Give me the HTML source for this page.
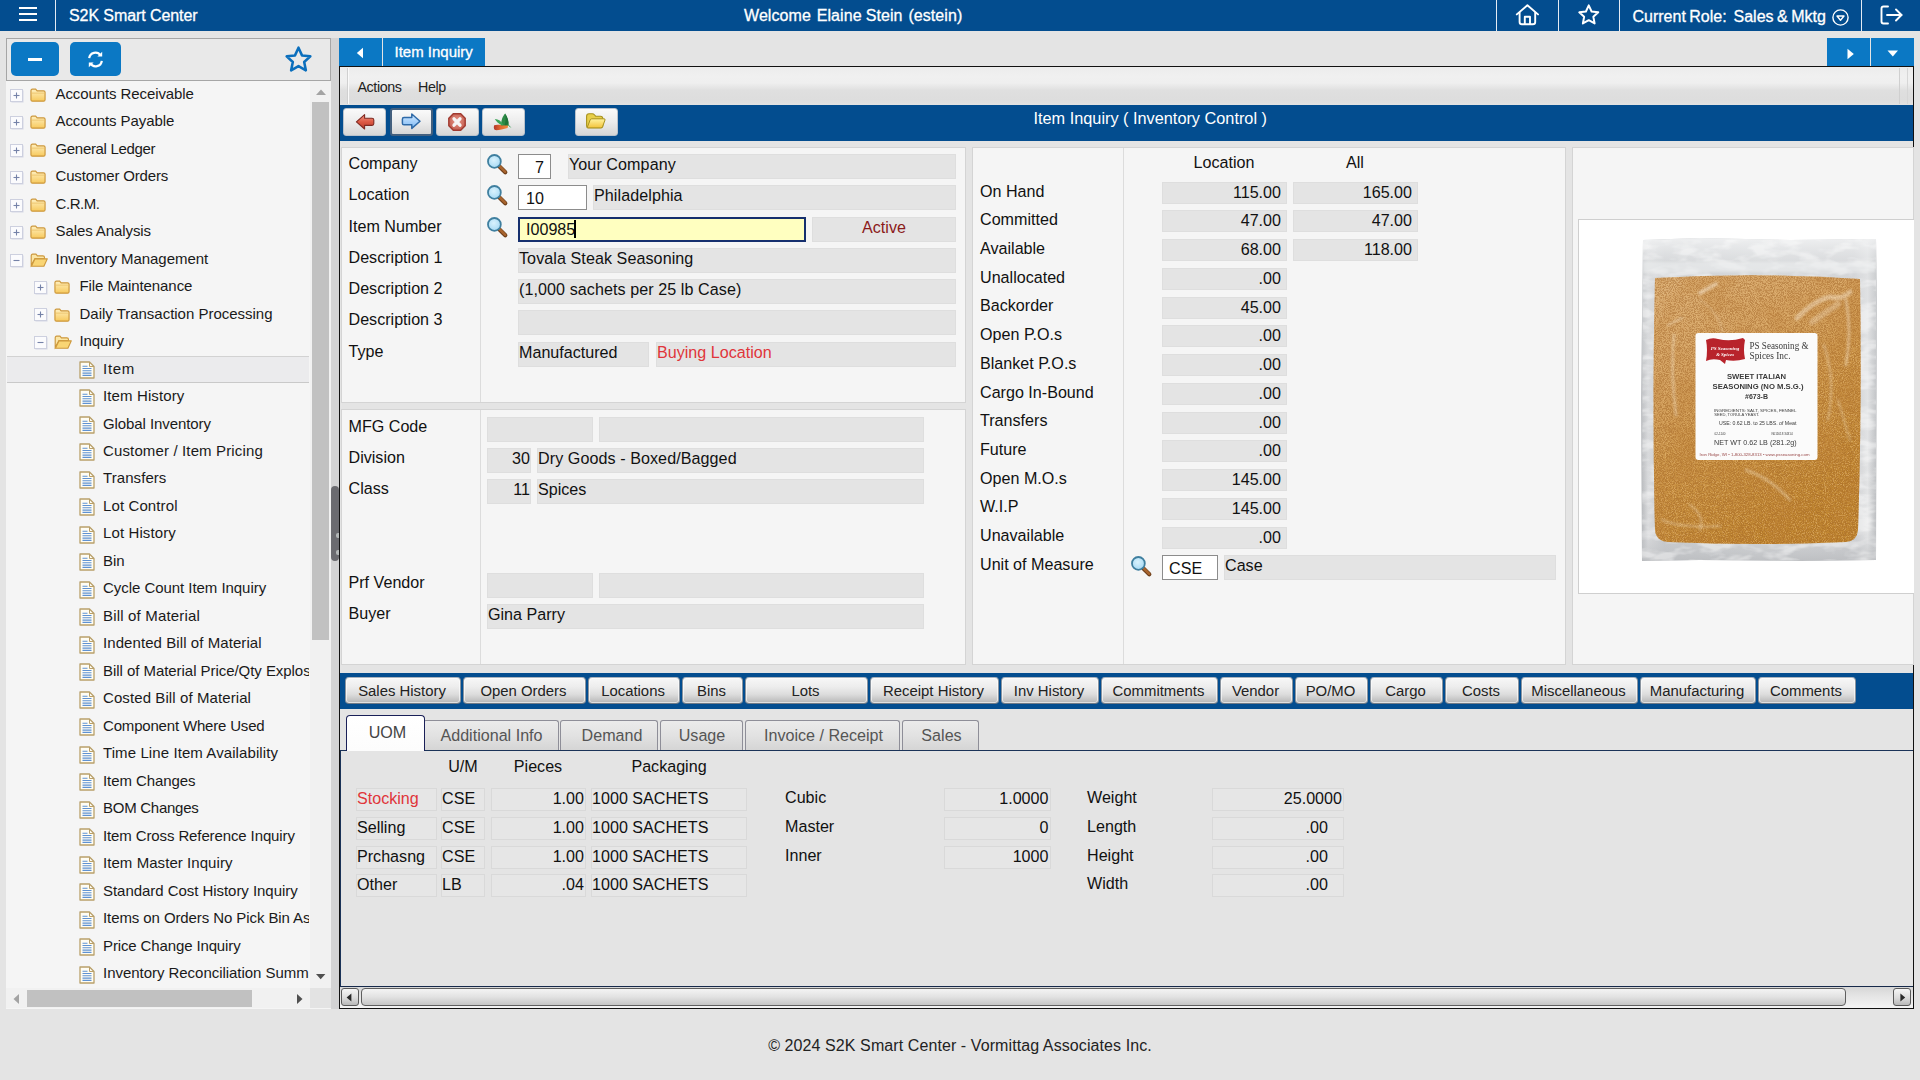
<!DOCTYPE html>
<html lang="en"><head><meta charset="utf-8"><title>S2K Smart Center</title>
<style>
html,body{margin:0;padding:0;}
body{width:1920px;height:1080px;overflow:hidden;background:#e4e4e4;font-family:"Liberation Sans",sans-serif;position:relative;color:#111;}
div{position:absolute;box-sizing:border-box;}
svg{position:absolute;overflow:visible;}
.t{white-space:nowrap;transform:translateY(-50%);line-height:1;}
.f{font-size:16.13px;}
.lbl{font-size:16.13px;white-space:nowrap;transform:translateY(-50%);line-height:1;color:#111;margin-top:-1px;}
.fld{background:#e4e4e4;border:1px solid #dedede;font-size:16.13px;white-space:nowrap;overflow:hidden;line-height:19px;padding:0;color:#111;}
.fld2{background:#e6e6e6;border:1px solid #d9d9d9;font-size:16.13px;white-space:nowrap;overflow:hidden;line-height:18px;padding:0 0px;color:#111;}
.inp{background:#fff;border:1px solid #8c8c8c;font-size:16.13px;white-space:nowrap;overflow:hidden;line-height:25px;padding:0 7px;color:#111;}
.r{text-align:right;}
.c{text-align:center;}
.panel{background:#f5f5f5;border:1px solid #d4d4d4;}
.tree{font-size:15px;white-space:nowrap;transform:translateY(-50%);line-height:1;color:#1a1a1a;margin-top:-1.25px;margin-left:1px;letter-spacing:-0.09px;}
.w{-webkit-text-stroke:0.3px #fff;}
.btn{background:linear-gradient(#f7f7f7 0%,#ededed 35%,#dddddd 65%,#c4c4c4 88%,#b2b2b2 100%);border:1px solid #7d8894;border-color:#aab3bd #8a949f #6f7a86 #8a949f;border-radius:4px;font-size:14.9px;text-align:center;line-height:26.5px;padding-right:2px;color:#222;white-space:nowrap;box-shadow:inset 0 0 0 1px rgba(255,255,255,.6);}
.tbtn{background:linear-gradient(#fafafa 0%,#ececec 50%,#d6d6d6 100%);border:1px solid #b9c2cc;border-radius:3px;}
.tab{background:linear-gradient(#ebebeb,#e2e2e2 50%,#d5d5d5);border:1px solid #8e8e98;border-bottom:none;border-radius:3px 3px 0 0;font-size:16.13px;text-align:center;color:#555;line-height:29px;white-space:nowrap;}
</style></head><body>
<svg width="0" height="0" style="left:0;top:0"><defs><linearGradient id="fg" x1="0" y1="0" x2="0" y2="1"><stop offset="0" stop-color="#fff0c0"/><stop offset="1" stop-color="#f7c95c"/></linearGradient><radialGradient id="mg" cx="0.45" cy="0.4" r="0.7"><stop offset="0" stop-color="#d9f2fd"/><stop offset="1" stop-color="#9fd6f3"/></radialGradient></defs></svg>
<div style="left:0px;top:0px;width:1920px;height:31px;background:#034d8f;"></div>
<div style="left:19px;top:7px;width:18px;height:2px;background:#fff;"></div>
<div style="left:19px;top:13px;width:18px;height:2px;background:#fff;"></div>
<div style="left:19px;top:19px;width:18px;height:2px;background:#fff;"></div>
<div style="left:55px;top:0px;width:1px;height:31px;background:#e4ebf4;"></div>
<div class="t w" style="left:69px;top:15.5px;color:#fff;font-size:16px;letter-spacing:-0.08px;">S2K Smart Center</div>
<div class="t w" style="left:744px;top:15.5px;color:#fff;font-size:16px;word-spacing:-1.6px;letter-spacing:0.07px;">Welcome&nbsp; Elaine <span style="margin-left:1.2px">Stein</span>&nbsp; (estein)</div>
<div style="left:1496px;top:0px;width:1px;height:31px;background:#e4ebf4;"></div>
<div style="left:1558px;top:0px;width:1px;height:31px;background:#e4ebf4;"></div>
<div style="left:1619px;top:0px;width:1px;height:31px;background:#e4ebf4;"></div>
<div style="left:1861px;top:0px;width:1px;height:31px;background:#e4ebf4;"></div>
<svg style="left:1515px;top:3px" width="25" height="23" viewBox="0 0 25 23" fill="none" stroke="#fff" stroke-width="1.9" stroke-linejoin="round" stroke-linecap="round"><path d="M1.8 11.4 L12.4 2.2 L23 11.4"/><path d="M4.6 9.6 V19 Q4.6 21.3 6.9 21.3 H17.9 Q20.2 21.3 20.2 19 V9.6"/><path d="M9.8 21 V13.8 H15 V21"/></svg>
<svg style="left:1577px;top:2.5px" width="23.5" height="23.5" viewBox="0 0 24 24" fill="none" stroke="#fff" stroke-width="2" stroke-linejoin="round"><path d="M12 2.4 L14.9 8.7 L21.7 9.5 L16.7 14.1 L18 20.9 L12 17.5 L6 20.9 L7.3 14.1 L2.3 9.5 L9.1 8.7 Z"/></svg>
<div class="t w" style="left:1632.5px;top:17.2px;color:#fff;font-size:16px;word-spacing:-1px;">Current Role:&nbsp; Sales &amp; Mktg</div>
<svg style="left:1832px;top:9px" width="17" height="17" viewBox="0 0 17 17" fill="none" stroke="#fff" stroke-width="1.4"><circle cx="8.5" cy="8.5" r="7.6"/><path d="M5 7 H12 L8.5 11.2 Z" stroke-linejoin="round"/></svg>
<svg style="left:1880px;top:4.5px" width="24" height="20" viewBox="0 0 24 20" fill="none" stroke="#fff" stroke-width="1.9" stroke-linecap="round" stroke-linejoin="round"><path d="M8 1.5 H3.5 Q1.5 1.5 1.5 3.5 V16.5 Q1.5 18.5 3.5 18.5 H8"/><path d="M7 10 H21.5"/><path d="M16 4.5 L21.5 10 L16 15.5"/></svg>
<div style="left:6px;top:38px;width:325px;height:971px;background:#f5f5f5;"></div>
<div style="left:6px;top:38px;width:325px;height:43px;background:#e9e9e9;border:1px solid #a6a6a6;"></div>
<div style="left:11px;top:42px;width:48px;height:34px;background:#0b78c4;border-radius:5px;"></div>
<div style="left:28px;top:58px;width:14px;height:3px;background:#fff;"></div>
<div style="left:70px;top:42px;width:51px;height:34px;background:#0b78c4;border-radius:5px;"></div>
<svg style="left:87px;top:51px" width="17" height="17" viewBox="0 0 17 17" fill="none" stroke="#fff" stroke-width="2.2"><path d="M2.2 7.2 A6.2 6.2 0 0 1 13.6 4.6"/><path d="M14.8 9.8 A6.2 6.2 0 0 1 3.4 12.4"/><path d="M15.2 0.8 V5.6 H10.4 Z" fill="#fff" stroke="none"/><path d="M1.8 16.2 V11.4 H6.6 Z" fill="#fff" stroke="none"/></svg>
<svg style="left:284px;top:45px" width="29" height="29" viewBox="0 0 24 24" fill="none" stroke="#0b6fbd" stroke-width="2.1" stroke-linejoin="round"><path d="M12 2.2 L14.9 8.6 L21.8 9.4 L16.7 14.1 L18.1 21 L12 17.5 L5.9 21 L7.3 14.1 L2.2 9.4 L9.1 8.6 Z"/></svg>
<div style="left:7px;top:81px;width:302px;height:907px;overflow:hidden;"><div style="left:0px;top:275px;width:304px;height:27px;background:#ebebed;border-bottom:1px solid #c9c9c9;border-top:1px solid #d2d2d2;"></div>
<svg style="left:3px;top:7.6px" width="14" height="14" viewBox="0 0 14 14"><rect x="1.5" y="1.5" width="12" height="12" fill="#c9cce0" opacity="0.7"/><rect x="0.5" y="0.5" width="12" height="12" fill="#fbfbfd" stroke="#cdd0df"/><path d="M3.5 6.5 H9.5" stroke="#7582a8" stroke-width="1.1"/><path d="M6.5 3.5 V9.5" stroke="#7582a8" stroke-width="1.1"/></svg>
<svg style="left:23px;top:6.8px" width="16" height="14.2" viewBox="0 0 17 15"><path d="M1 3 Q1 1.2 2.6 1.2 H6 L7.6 3 H14.4 Q16 3 16 4.6 V12.4 Q16 14 14.4 14 H2.6 Q1 14 1 12.4 Z" fill="url(#fg)" stroke="#cd983c" stroke-width="1.25"/><path d="M1.6 5.4 H15.4" stroke="#e9bd63" stroke-width="0.8" fill="none"/></svg>
<div class="tree" style="left:47.5px;top:13.0px;">Accounts Receivable</div>
<svg style="left:3px;top:35.1px" width="14" height="14" viewBox="0 0 14 14"><rect x="1.5" y="1.5" width="12" height="12" fill="#c9cce0" opacity="0.7"/><rect x="0.5" y="0.5" width="12" height="12" fill="#fbfbfd" stroke="#cdd0df"/><path d="M3.5 6.5 H9.5" stroke="#7582a8" stroke-width="1.1"/><path d="M6.5 3.5 V9.5" stroke="#7582a8" stroke-width="1.1"/></svg>
<svg style="left:23px;top:34.3px" width="16" height="14.2" viewBox="0 0 17 15"><path d="M1 3 Q1 1.2 2.6 1.2 H6 L7.6 3 H14.4 Q16 3 16 4.6 V12.4 Q16 14 14.4 14 H2.6 Q1 14 1 12.4 Z" fill="url(#fg)" stroke="#cd983c" stroke-width="1.25"/><path d="M1.6 5.4 H15.4" stroke="#e9bd63" stroke-width="0.8" fill="none"/></svg>
<div class="tree" style="left:47.5px;top:40.480000000000004px;">Accounts Payable</div>
<svg style="left:3px;top:62.6px" width="14" height="14" viewBox="0 0 14 14"><rect x="1.5" y="1.5" width="12" height="12" fill="#c9cce0" opacity="0.7"/><rect x="0.5" y="0.5" width="12" height="12" fill="#fbfbfd" stroke="#cdd0df"/><path d="M3.5 6.5 H9.5" stroke="#7582a8" stroke-width="1.1"/><path d="M6.5 3.5 V9.5" stroke="#7582a8" stroke-width="1.1"/></svg>
<svg style="left:23px;top:61.8px" width="16" height="14.2" viewBox="0 0 17 15"><path d="M1 3 Q1 1.2 2.6 1.2 H6 L7.6 3 H14.4 Q16 3 16 4.6 V12.4 Q16 14 14.4 14 H2.6 Q1 14 1 12.4 Z" fill="url(#fg)" stroke="#cd983c" stroke-width="1.25"/><path d="M1.6 5.4 H15.4" stroke="#e9bd63" stroke-width="0.8" fill="none"/></svg>
<div class="tree" style="left:47.5px;top:67.96000000000001px;letter-spacing:-0.321px;">General Ledger</div>
<svg style="left:3px;top:90.0px" width="14" height="14" viewBox="0 0 14 14"><rect x="1.5" y="1.5" width="12" height="12" fill="#c9cce0" opacity="0.7"/><rect x="0.5" y="0.5" width="12" height="12" fill="#fbfbfd" stroke="#cdd0df"/><path d="M3.5 6.5 H9.5" stroke="#7582a8" stroke-width="1.1"/><path d="M6.5 3.5 V9.5" stroke="#7582a8" stroke-width="1.1"/></svg>
<svg style="left:23px;top:89.2px" width="16" height="14.2" viewBox="0 0 17 15"><path d="M1 3 Q1 1.2 2.6 1.2 H6 L7.6 3 H14.4 Q16 3 16 4.6 V12.4 Q16 14 14.4 14 H2.6 Q1 14 1 12.4 Z" fill="url(#fg)" stroke="#cd983c" stroke-width="1.25"/><path d="M1.6 5.4 H15.4" stroke="#e9bd63" stroke-width="0.8" fill="none"/></svg>
<div class="tree" style="left:47.5px;top:95.44px;letter-spacing:-0.161px;">Customer Orders</div>
<svg style="left:3px;top:117.5px" width="14" height="14" viewBox="0 0 14 14"><rect x="1.5" y="1.5" width="12" height="12" fill="#c9cce0" opacity="0.7"/><rect x="0.5" y="0.5" width="12" height="12" fill="#fbfbfd" stroke="#cdd0df"/><path d="M3.5 6.5 H9.5" stroke="#7582a8" stroke-width="1.1"/><path d="M6.5 3.5 V9.5" stroke="#7582a8" stroke-width="1.1"/></svg>
<svg style="left:23px;top:116.7px" width="16" height="14.2" viewBox="0 0 17 15"><path d="M1 3 Q1 1.2 2.6 1.2 H6 L7.6 3 H14.4 Q16 3 16 4.6 V12.4 Q16 14 14.4 14 H2.6 Q1 14 1 12.4 Z" fill="url(#fg)" stroke="#cd983c" stroke-width="1.25"/><path d="M1.6 5.4 H15.4" stroke="#e9bd63" stroke-width="0.8" fill="none"/></svg>
<div class="tree" style="left:47.5px;top:122.92000000000002px;letter-spacing:-0.430px;">C.R.M.</div>
<svg style="left:3px;top:145.0px" width="14" height="14" viewBox="0 0 14 14"><rect x="1.5" y="1.5" width="12" height="12" fill="#c9cce0" opacity="0.7"/><rect x="0.5" y="0.5" width="12" height="12" fill="#fbfbfd" stroke="#cdd0df"/><path d="M3.5 6.5 H9.5" stroke="#7582a8" stroke-width="1.1"/><path d="M6.5 3.5 V9.5" stroke="#7582a8" stroke-width="1.1"/></svg>
<svg style="left:23px;top:144.2px" width="16" height="14.2" viewBox="0 0 17 15"><path d="M1 3 Q1 1.2 2.6 1.2 H6 L7.6 3 H14.4 Q16 3 16 4.6 V12.4 Q16 14 14.4 14 H2.6 Q1 14 1 12.4 Z" fill="url(#fg)" stroke="#cd983c" stroke-width="1.25"/><path d="M1.6 5.4 H15.4" stroke="#e9bd63" stroke-width="0.8" fill="none"/></svg>
<div class="tree" style="left:47.5px;top:150.4px;">Sales Analysis</div>
<svg style="left:3px;top:172.5px" width="14" height="14" viewBox="0 0 14 14"><rect x="1.5" y="1.5" width="12" height="12" fill="#c9cce0" opacity="0.7"/><rect x="0.5" y="0.5" width="12" height="12" fill="#fbfbfd" stroke="#cdd0df"/><path d="M3.5 6.5 H9.5" stroke="#7582a8" stroke-width="1.1"/></svg>
<svg style="left:23px;top:171.7px" width="18.5" height="14.2" viewBox="0 0 19 15"><path d="M1 3 Q1 1.2 2.6 1.2 H6 L7.6 3 H13.4 Q15 3 15 4.6 V6 H5 L1 13 Z" fill="#fbe6a6" stroke="#cd983c" stroke-width="1.2"/><path d="M1.2 14 L5 6.2 H18 L14.4 14 Z" fill="#f9d574" stroke="#cd983c" stroke-width="1.2" stroke-linejoin="round"/></svg>
<div class="tree" style="left:47.5px;top:177.88px;letter-spacing:-0.037px;">Inventory Management</div>
<svg style="left:27px;top:200.0px" width="14" height="14" viewBox="0 0 14 14"><rect x="1.5" y="1.5" width="12" height="12" fill="#c9cce0" opacity="0.7"/><rect x="0.5" y="0.5" width="12" height="12" fill="#fbfbfd" stroke="#cdd0df"/><path d="M3.5 6.5 H9.5" stroke="#7582a8" stroke-width="1.1"/><path d="M6.5 3.5 V9.5" stroke="#7582a8" stroke-width="1.1"/></svg>
<svg style="left:47px;top:199.2px" width="16" height="14.2" viewBox="0 0 17 15"><path d="M1 3 Q1 1.2 2.6 1.2 H6 L7.6 3 H14.4 Q16 3 16 4.6 V12.4 Q16 14 14.4 14 H2.6 Q1 14 1 12.4 Z" fill="url(#fg)" stroke="#cd983c" stroke-width="1.25"/><path d="M1.6 5.4 H15.4" stroke="#e9bd63" stroke-width="0.8" fill="none"/></svg>
<div class="tree" style="left:71.5px;top:205.36px;">File Maintenance</div>
<svg style="left:27px;top:227.4px" width="14" height="14" viewBox="0 0 14 14"><rect x="1.5" y="1.5" width="12" height="12" fill="#c9cce0" opacity="0.7"/><rect x="0.5" y="0.5" width="12" height="12" fill="#fbfbfd" stroke="#cdd0df"/><path d="M3.5 6.5 H9.5" stroke="#7582a8" stroke-width="1.1"/><path d="M6.5 3.5 V9.5" stroke="#7582a8" stroke-width="1.1"/></svg>
<svg style="left:47px;top:226.6px" width="16" height="14.2" viewBox="0 0 17 15"><path d="M1 3 Q1 1.2 2.6 1.2 H6 L7.6 3 H14.4 Q16 3 16 4.6 V12.4 Q16 14 14.4 14 H2.6 Q1 14 1 12.4 Z" fill="url(#fg)" stroke="#cd983c" stroke-width="1.25"/><path d="M1.6 5.4 H15.4" stroke="#e9bd63" stroke-width="0.8" fill="none"/></svg>
<div class="tree" style="left:71.5px;top:232.84000000000003px;letter-spacing:-0.016px;">Daily Transaction Processing</div>
<svg style="left:27px;top:254.9px" width="14" height="14" viewBox="0 0 14 14"><rect x="1.5" y="1.5" width="12" height="12" fill="#c9cce0" opacity="0.7"/><rect x="0.5" y="0.5" width="12" height="12" fill="#fbfbfd" stroke="#cdd0df"/><path d="M3.5 6.5 H9.5" stroke="#7582a8" stroke-width="1.1"/></svg>
<svg style="left:47px;top:254.1px" width="18.5" height="14.2" viewBox="0 0 19 15"><path d="M1 3 Q1 1.2 2.6 1.2 H6 L7.6 3 H13.4 Q15 3 15 4.6 V6 H5 L1 13 Z" fill="#fbe6a6" stroke="#cd983c" stroke-width="1.2"/><path d="M1.2 14 L5 6.2 H18 L14.4 14 Z" fill="#f9d574" stroke="#cd983c" stroke-width="1.2" stroke-linejoin="round"/></svg>
<div class="tree" style="left:71.5px;top:260.32px;">Inquiry</div>
<svg style="left:72px;top:280.0px" width="16" height="18" viewBox="0 0 16 18"><path d="M1 1 H10.5 L15 5.5 V17 H1 Z" fill="#fffdf4" stroke="#b9a06a" stroke-width="1.3" stroke-linejoin="round"/><path d="M10.5 1 V5.5 H15" fill="none" stroke="#b9a06a" stroke-width="1"/><path d="M3.5 7.5 H12.5 M3.5 9.8 H12.5 M3.5 12.1 H12.5 M3.5 14.4 H12.5 M3.5 5.2 H8.5" stroke="#5f92d2" stroke-width="1.1"/></svg>
<div class="tree" style="left:95px;top:287.8px;letter-spacing:0.710px;">Item</div>
<svg style="left:72px;top:307.5px" width="16" height="18" viewBox="0 0 16 18"><path d="M1 1 H10.5 L15 5.5 V17 H1 Z" fill="#fffdf4" stroke="#b9a06a" stroke-width="1.3" stroke-linejoin="round"/><path d="M10.5 1 V5.5 H15" fill="none" stroke="#b9a06a" stroke-width="1"/><path d="M3.5 7.5 H12.5 M3.5 9.8 H12.5 M3.5 12.1 H12.5 M3.5 14.4 H12.5 M3.5 5.2 H8.5" stroke="#5f92d2" stroke-width="1.1"/></svg>
<div class="tree" style="left:95px;top:315.28000000000003px;letter-spacing:0.119px;">Item History</div>
<svg style="left:72px;top:335.0px" width="16" height="18" viewBox="0 0 16 18"><path d="M1 1 H10.5 L15 5.5 V17 H1 Z" fill="#fffdf4" stroke="#b9a06a" stroke-width="1.3" stroke-linejoin="round"/><path d="M10.5 1 V5.5 H15" fill="none" stroke="#b9a06a" stroke-width="1"/><path d="M3.5 7.5 H12.5 M3.5 9.8 H12.5 M3.5 12.1 H12.5 M3.5 14.4 H12.5 M3.5 5.2 H8.5" stroke="#5f92d2" stroke-width="1.1"/></svg>
<div class="tree" style="left:95px;top:342.76px;">Global Inventory</div>
<svg style="left:72px;top:362.4px" width="16" height="18" viewBox="0 0 16 18"><path d="M1 1 H10.5 L15 5.5 V17 H1 Z" fill="#fffdf4" stroke="#b9a06a" stroke-width="1.3" stroke-linejoin="round"/><path d="M10.5 1 V5.5 H15" fill="none" stroke="#b9a06a" stroke-width="1"/><path d="M3.5 7.5 H12.5 M3.5 9.8 H12.5 M3.5 12.1 H12.5 M3.5 14.4 H12.5 M3.5 5.2 H8.5" stroke="#5f92d2" stroke-width="1.1"/></svg>
<div class="tree" style="left:95px;top:370.24px;letter-spacing:0.137px;">Customer / Item Pricing</div>
<svg style="left:72px;top:389.9px" width="16" height="18" viewBox="0 0 16 18"><path d="M1 1 H10.5 L15 5.5 V17 H1 Z" fill="#fffdf4" stroke="#b9a06a" stroke-width="1.3" stroke-linejoin="round"/><path d="M10.5 1 V5.5 H15" fill="none" stroke="#b9a06a" stroke-width="1"/><path d="M3.5 7.5 H12.5 M3.5 9.8 H12.5 M3.5 12.1 H12.5 M3.5 14.4 H12.5 M3.5 5.2 H8.5" stroke="#5f92d2" stroke-width="1.1"/></svg>
<div class="tree" style="left:95px;top:397.72px;letter-spacing:0.073px;">Transfers</div>
<svg style="left:72px;top:417.4px" width="16" height="18" viewBox="0 0 16 18"><path d="M1 1 H10.5 L15 5.5 V17 H1 Z" fill="#fffdf4" stroke="#b9a06a" stroke-width="1.3" stroke-linejoin="round"/><path d="M10.5 1 V5.5 H15" fill="none" stroke="#b9a06a" stroke-width="1"/><path d="M3.5 7.5 H12.5 M3.5 9.8 H12.5 M3.5 12.1 H12.5 M3.5 14.4 H12.5 M3.5 5.2 H8.5" stroke="#5f92d2" stroke-width="1.1"/></svg>
<div class="tree" style="left:95px;top:425.2px;letter-spacing:0.110px;">Lot Control</div>
<svg style="left:72px;top:444.9px" width="16" height="18" viewBox="0 0 16 18"><path d="M1 1 H10.5 L15 5.5 V17 H1 Z" fill="#fffdf4" stroke="#b9a06a" stroke-width="1.3" stroke-linejoin="round"/><path d="M10.5 1 V5.5 H15" fill="none" stroke="#b9a06a" stroke-width="1"/><path d="M3.5 7.5 H12.5 M3.5 9.8 H12.5 M3.5 12.1 H12.5 M3.5 14.4 H12.5 M3.5 5.2 H8.5" stroke="#5f92d2" stroke-width="1.1"/></svg>
<div class="tree" style="left:95px;top:452.68000000000006px;letter-spacing:0.110px;">Lot History</div>
<svg style="left:72px;top:472.4px" width="16" height="18" viewBox="0 0 16 18"><path d="M1 1 H10.5 L15 5.5 V17 H1 Z" fill="#fffdf4" stroke="#b9a06a" stroke-width="1.3" stroke-linejoin="round"/><path d="M10.5 1 V5.5 H15" fill="none" stroke="#b9a06a" stroke-width="1"/><path d="M3.5 7.5 H12.5 M3.5 9.8 H12.5 M3.5 12.1 H12.5 M3.5 14.4 H12.5 M3.5 5.2 H8.5" stroke="#5f92d2" stroke-width="1.1"/></svg>
<div class="tree" style="left:95px;top:480.1600000000001px;">Bin</div>
<svg style="left:72px;top:499.8px" width="16" height="18" viewBox="0 0 16 18"><path d="M1 1 H10.5 L15 5.5 V17 H1 Z" fill="#fffdf4" stroke="#b9a06a" stroke-width="1.3" stroke-linejoin="round"/><path d="M10.5 1 V5.5 H15" fill="none" stroke="#b9a06a" stroke-width="1"/><path d="M3.5 7.5 H12.5 M3.5 9.8 H12.5 M3.5 12.1 H12.5 M3.5 14.4 H12.5 M3.5 5.2 H8.5" stroke="#5f92d2" stroke-width="1.1"/></svg>
<div class="tree" style="left:95px;top:507.64px;letter-spacing:-0.047px;">Cycle Count Item Inquiry</div>
<svg style="left:72px;top:527.3px" width="16" height="18" viewBox="0 0 16 18"><path d="M1 1 H10.5 L15 5.5 V17 H1 Z" fill="#fffdf4" stroke="#b9a06a" stroke-width="1.3" stroke-linejoin="round"/><path d="M10.5 1 V5.5 H15" fill="none" stroke="#b9a06a" stroke-width="1"/><path d="M3.5 7.5 H12.5 M3.5 9.8 H12.5 M3.5 12.1 H12.5 M3.5 14.4 H12.5 M3.5 5.2 H8.5" stroke="#5f92d2" stroke-width="1.1"/></svg>
<div class="tree" style="left:95px;top:535.12px;letter-spacing:0.177px;">Bill of Material</div>
<svg style="left:72px;top:554.8px" width="16" height="18" viewBox="0 0 16 18"><path d="M1 1 H10.5 L15 5.5 V17 H1 Z" fill="#fffdf4" stroke="#b9a06a" stroke-width="1.3" stroke-linejoin="round"/><path d="M10.5 1 V5.5 H15" fill="none" stroke="#b9a06a" stroke-width="1"/><path d="M3.5 7.5 H12.5 M3.5 9.8 H12.5 M3.5 12.1 H12.5 M3.5 14.4 H12.5 M3.5 5.2 H8.5" stroke="#5f92d2" stroke-width="1.1"/></svg>
<div class="tree" style="left:95px;top:562.6px;letter-spacing:0.077px;">Indented Bill of Material</div>
<svg style="left:72px;top:582.3px" width="16" height="18" viewBox="0 0 16 18"><path d="M1 1 H10.5 L15 5.5 V17 H1 Z" fill="#fffdf4" stroke="#b9a06a" stroke-width="1.3" stroke-linejoin="round"/><path d="M10.5 1 V5.5 H15" fill="none" stroke="#b9a06a" stroke-width="1"/><path d="M3.5 7.5 H12.5 M3.5 9.8 H12.5 M3.5 12.1 H12.5 M3.5 14.4 H12.5 M3.5 5.2 H8.5" stroke="#5f92d2" stroke-width="1.1"/></svg>
<div class="tree" style="left:95px;top:590.08px;letter-spacing:-0.049px;">Bill of Material Price/Qty Explosion</div>
<svg style="left:72px;top:609.8px" width="16" height="18" viewBox="0 0 16 18"><path d="M1 1 H10.5 L15 5.5 V17 H1 Z" fill="#fffdf4" stroke="#b9a06a" stroke-width="1.3" stroke-linejoin="round"/><path d="M10.5 1 V5.5 H15" fill="none" stroke="#b9a06a" stroke-width="1"/><path d="M3.5 7.5 H12.5 M3.5 9.8 H12.5 M3.5 12.1 H12.5 M3.5 14.4 H12.5 M3.5 5.2 H8.5" stroke="#5f92d2" stroke-width="1.1"/></svg>
<div class="tree" style="left:95px;top:617.5600000000001px;letter-spacing:0.092px;">Costed Bill of Material</div>
<svg style="left:72px;top:637.2px" width="16" height="18" viewBox="0 0 16 18"><path d="M1 1 H10.5 L15 5.5 V17 H1 Z" fill="#fffdf4" stroke="#b9a06a" stroke-width="1.3" stroke-linejoin="round"/><path d="M10.5 1 V5.5 H15" fill="none" stroke="#b9a06a" stroke-width="1"/><path d="M3.5 7.5 H12.5 M3.5 9.8 H12.5 M3.5 12.1 H12.5 M3.5 14.4 H12.5 M3.5 5.2 H8.5" stroke="#5f92d2" stroke-width="1.1"/></svg>
<div class="tree" style="left:95px;top:645.04px;letter-spacing:-0.179px;">Component Where Used</div>
<svg style="left:72px;top:664.7px" width="16" height="18" viewBox="0 0 16 18"><path d="M1 1 H10.5 L15 5.5 V17 H1 Z" fill="#fffdf4" stroke="#b9a06a" stroke-width="1.3" stroke-linejoin="round"/><path d="M10.5 1 V5.5 H15" fill="none" stroke="#b9a06a" stroke-width="1"/><path d="M3.5 7.5 H12.5 M3.5 9.8 H12.5 M3.5 12.1 H12.5 M3.5 14.4 H12.5 M3.5 5.2 H8.5" stroke="#5f92d2" stroke-width="1.1"/></svg>
<div class="tree" style="left:95px;top:672.52px;letter-spacing:0.091px;">Time Line Item Availability</div>
<svg style="left:72px;top:692.2px" width="16" height="18" viewBox="0 0 16 18"><path d="M1 1 H10.5 L15 5.5 V17 H1 Z" fill="#fffdf4" stroke="#b9a06a" stroke-width="1.3" stroke-linejoin="round"/><path d="M10.5 1 V5.5 H15" fill="none" stroke="#b9a06a" stroke-width="1"/><path d="M3.5 7.5 H12.5 M3.5 9.8 H12.5 M3.5 12.1 H12.5 M3.5 14.4 H12.5 M3.5 5.2 H8.5" stroke="#5f92d2" stroke-width="1.1"/></svg>
<div class="tree" style="left:95px;top:700.0px;">Item Changes</div>
<svg style="left:72px;top:719.7px" width="16" height="18" viewBox="0 0 16 18"><path d="M1 1 H10.5 L15 5.5 V17 H1 Z" fill="#fffdf4" stroke="#b9a06a" stroke-width="1.3" stroke-linejoin="round"/><path d="M10.5 1 V5.5 H15" fill="none" stroke="#b9a06a" stroke-width="1"/><path d="M3.5 7.5 H12.5 M3.5 9.8 H12.5 M3.5 12.1 H12.5 M3.5 14.4 H12.5 M3.5 5.2 H8.5" stroke="#5f92d2" stroke-width="1.1"/></svg>
<div class="tree" style="left:95px;top:727.48px;letter-spacing:-0.260px;">BOM Changes</div>
<svg style="left:72px;top:747.2px" width="16" height="18" viewBox="0 0 16 18"><path d="M1 1 H10.5 L15 5.5 V17 H1 Z" fill="#fffdf4" stroke="#b9a06a" stroke-width="1.3" stroke-linejoin="round"/><path d="M10.5 1 V5.5 H15" fill="none" stroke="#b9a06a" stroke-width="1"/><path d="M3.5 7.5 H12.5 M3.5 9.8 H12.5 M3.5 12.1 H12.5 M3.5 14.4 H12.5 M3.5 5.2 H8.5" stroke="#5f92d2" stroke-width="1.1"/></svg>
<div class="tree" style="left:95px;top:754.96px;letter-spacing:-0.116px;">Item Cross Reference Inquiry</div>
<svg style="left:72px;top:774.6px" width="16" height="18" viewBox="0 0 16 18"><path d="M1 1 H10.5 L15 5.5 V17 H1 Z" fill="#fffdf4" stroke="#b9a06a" stroke-width="1.3" stroke-linejoin="round"/><path d="M10.5 1 V5.5 H15" fill="none" stroke="#b9a06a" stroke-width="1"/><path d="M3.5 7.5 H12.5 M3.5 9.8 H12.5 M3.5 12.1 H12.5 M3.5 14.4 H12.5 M3.5 5.2 H8.5" stroke="#5f92d2" stroke-width="1.1"/></svg>
<div class="tree" style="left:95px;top:782.44px;letter-spacing:0.060px;">Item Master Inquiry</div>
<svg style="left:72px;top:802.1px" width="16" height="18" viewBox="0 0 16 18"><path d="M1 1 H10.5 L15 5.5 V17 H1 Z" fill="#fffdf4" stroke="#b9a06a" stroke-width="1.3" stroke-linejoin="round"/><path d="M10.5 1 V5.5 H15" fill="none" stroke="#b9a06a" stroke-width="1"/><path d="M3.5 7.5 H12.5 M3.5 9.8 H12.5 M3.5 12.1 H12.5 M3.5 14.4 H12.5 M3.5 5.2 H8.5" stroke="#5f92d2" stroke-width="1.1"/></svg>
<div class="tree" style="left:95px;top:809.92px;letter-spacing:-0.044px;">Standard Cost History Inquiry</div>
<svg style="left:72px;top:829.6px" width="16" height="18" viewBox="0 0 16 18"><path d="M1 1 H10.5 L15 5.5 V17 H1 Z" fill="#fffdf4" stroke="#b9a06a" stroke-width="1.3" stroke-linejoin="round"/><path d="M10.5 1 V5.5 H15" fill="none" stroke="#b9a06a" stroke-width="1"/><path d="M3.5 7.5 H12.5 M3.5 9.8 H12.5 M3.5 12.1 H12.5 M3.5 14.4 H12.5 M3.5 5.2 H8.5" stroke="#5f92d2" stroke-width="1.1"/></svg>
<div class="tree" style="left:95px;top:837.4px;">Items on Orders No Pick Bin Assigned</div>
<svg style="left:72px;top:857.1px" width="16" height="18" viewBox="0 0 16 18"><path d="M1 1 H10.5 L15 5.5 V17 H1 Z" fill="#fffdf4" stroke="#b9a06a" stroke-width="1.3" stroke-linejoin="round"/><path d="M10.5 1 V5.5 H15" fill="none" stroke="#b9a06a" stroke-width="1"/><path d="M3.5 7.5 H12.5 M3.5 9.8 H12.5 M3.5 12.1 H12.5 M3.5 14.4 H12.5 M3.5 5.2 H8.5" stroke="#5f92d2" stroke-width="1.1"/></svg>
<div class="tree" style="left:95px;top:864.88px;letter-spacing:-0.127px;">Price Change Inquiry</div>
<svg style="left:72px;top:884.6px" width="16" height="18" viewBox="0 0 16 18"><path d="M1 1 H10.5 L15 5.5 V17 H1 Z" fill="#fffdf4" stroke="#b9a06a" stroke-width="1.3" stroke-linejoin="round"/><path d="M10.5 1 V5.5 H15" fill="none" stroke="#b9a06a" stroke-width="1"/><path d="M3.5 7.5 H12.5 M3.5 9.8 H12.5 M3.5 12.1 H12.5 M3.5 14.4 H12.5 M3.5 5.2 H8.5" stroke="#5f92d2" stroke-width="1.1"/></svg>
<div class="tree" style="left:95px;top:892.36px;letter-spacing:-0.035px;">Inventory Reconciliation Summary</div>
</div>
<div style="left:310px;top:81px;width:21px;height:907px;background:#f1f1f1;"></div>
<div style="left:312px;top:102px;width:17px;height:538px;background:#c1c1c1;"></div>
<svg style="left:316px;top:89px" width="10" height="6"><path d="M0 6 L5 0.5 L10 6 Z" fill="#a3a3a3"/></svg>
<svg style="left:316px;top:974px" width="10" height="6"><path d="M0 0 L4.7 5.2 L9.4 0 Z" fill="#505050"/></svg>
<div style="left:6px;top:988px;width:304px;height:20px;background:#f1f1f1;"></div>
<div style="left:27px;top:990px;width:225px;height:17px;background:#c1c1c1;"></div>
<svg style="left:13px;top:994px" width="6" height="10"><path d="M6 0 L0.5 5 L6 10 Z" fill="#a3a3a3"/></svg>
<svg style="left:297px;top:994px" width="6" height="10"><path d="M0 0 L5.5 5 L0 10 Z" fill="#505050"/></svg>
<div style="left:310px;top:988px;width:21px;height:20px;background:#e3e3e3;"></div>
<div style="left:331px;top:38px;width:8px;height:971px;background:#d3d3d4;"></div>
<div style="left:331px;top:486px;width:8px;height:75px;background:#6b6b70;border-radius:4px;"></div>
<div style="left:336px;top:533px;width:3px;height:5px;background:#b4b8b8;border-radius:2px 0 0 2px;"></div>
<div style="left:336px;top:550px;width:3px;height:5px;background:#b4b8b8;border-radius:2px 0 0 2px;"></div>
<div style="left:339px;top:38px;width:43px;height:29px;background:#0b78c4;"></div>
<svg style="left:355.5px;top:46.5px" width="8" height="13"><path d="M7 0.8 L0.8 6 L7 11.2 Z" fill="#fff"/></svg>
<div style="left:383px;top:38px;width:102px;height:29px;background:#0b78c4;"></div>
<div class="t w" style="left:394.5px;top:50.7px;color:#fff;font-size:15px;">Item Inquiry</div>
<div style="left:1827px;top:38px;width:43px;height:29px;background:#0b78c4;"></div>
<svg style="left:1846.5px;top:47.5px" width="8" height="13"><path d="M0.5 0.8 L6.8 6 L0.5 11.2 Z" fill="#fff"/></svg>
<div style="left:1871px;top:38px;width:43px;height:29px;background:#0b78c4;"></div>
<svg style="left:1887px;top:49.5px" width="13" height="8"><path d="M0.5 0.5 L5.8 6.6 L11 0.5 Z" fill="#fff"/></svg>
<div style="left:339px;top:66px;width:1575px;height:943px;border:1px solid #111;background:#e4e4e4;"></div>
<div style="left:340px;top:67px;width:1573px;height:38px;background:linear-gradient(#ececec 0%,#f0f0f0 25%,#efefef 42%,#dfdfdf 62%,#dddddd 85%,#e2e2e2 100%);"></div>
<div style="left:347px;top:68px;width:1px;height:36px;background:#d0d0d0;"></div>
<div style="left:348px;top:68px;width:1px;height:36px;background:#fafafa;"></div>
<div style="left:1899px;top:68px;width:1px;height:36px;background:#cfcfcf;"></div>
<div style="left:1907px;top:68px;width:1px;height:36px;background:#d6d6d6;"></div>
<div class="t" style="left:357.5px;top:86.5px;font-size:14.3px;letter-spacing:-0.42px;color:#222;">Actions</div>
<div class="t" style="left:418px;top:86.5px;font-size:14.3px;letter-spacing:-0.42px;color:#222;">Help</div>
<div style="left:340px;top:105px;width:1573px;height:36px;background:#034d8f;"></div>
<div class="tbtn" style="left:343px;top:108px;width:43px;height:28px;"></div>
<div class="tbtn" style="left:390px;top:108px;width:43px;height:28px;border:2px solid #44607e;"></div>
<div class="tbtn" style="left:436px;top:108px;width:43px;height:28px;"></div>
<div class="tbtn" style="left:482px;top:108px;width:43px;height:28px;"></div>
<div class="tbtn" style="left:575px;top:108px;width:43px;height:28px;"></div>
<svg style="left:355px;top:113px" width="20" height="18" viewBox="0 0 20 18"><defs><linearGradient id="ra" x1="0" y1="0" x2="0" y2="1"><stop offset="0" stop-color="#f39a88"/><stop offset="0.5" stop-color="#dd5a45"/><stop offset="1" stop-color="#b83a2a"/></linearGradient></defs><path d="M1.4 8.8 L9.6 1.6 V5.2 H17 Q18.8 5.2 18.8 7 V10.6 Q18.8 12.4 17 12.4 H9.6 V16 Z" fill="url(#ra)" stroke="#7e2a22" stroke-width="1.1" stroke-linejoin="round"/></svg>
<svg style="left:401px;top:112px" width="20" height="18" viewBox="0 0 20 18"><defs><linearGradient id="ba" x1="0" y1="0" x2="0" y2="1"><stop offset="0" stop-color="#d4eaff"/><stop offset="1" stop-color="#7db9f5"/></linearGradient></defs><path d="M19 9.2 L10.8 2 V5.6 H3 Q1.4 5.6 1.4 7.2 V11.2 Q1.4 12.8 3 12.8 H10.8 V16.4 Z" fill="url(#ba)" stroke="#2f6aa8" stroke-width="1.5" stroke-linejoin="round"/></svg>
<svg style="left:448px;top:113px" width="18" height="18" viewBox="0 0 18 18"><defs><radialGradient id="oc" cx="0.5" cy="0.45" r="0.6"><stop offset="0" stop-color="#e79a8c"/><stop offset="1" stop-color="#c2584a"/></radialGradient></defs><path d="M5.3 0.8 H12.7 L17.2 5.3 V12.7 L12.7 17.2 H5.3 L0.8 12.7 V5.3 Z" fill="url(#oc)" stroke="#a03a30" stroke-width="1.4"/><path d="M6 5.8 L12 12.2 M12 5.8 L6 12.2" stroke="#f6f3f3" stroke-width="3.3" stroke-linecap="round"/></svg>
<svg style="left:493px;top:112px" width="20" height="20" viewBox="0 0 20 20"><defs><linearGradient id="lb" x1="0" y1="0" x2="1" y2="0"><stop offset="0" stop-color="#b2352a"/><stop offset="0.45" stop-color="#e2682f"/><stop offset="1" stop-color="#f0913f"/></linearGradient></defs><path d="M1.2 13.2 C5 12.2 11 12.9 15.4 12.5 L14.6 16 C10 17.4 4.5 18.6 1.9 18.1 C0.6 16.6 0.6 14.6 1.2 13.2Z" fill="url(#lb)"/><path d="M8.2 13.4 C7.8 8.4 9.8 4 12.2 1.4 C14.6 5.2 15.9 9.2 15.4 13.2 Z" fill="#2c8a46"/><path d="M12.2 1.4 C13 5.5 12.6 9.5 11.6 13.3 L15.4 13.2 C15.9 9.2 14.6 5.2 12.2 1.4Z" fill="#1f7438"/><path d="M9 13.3 C5.4 11.8 3.2 9.6 1.8 7 C5.4 7.2 8.4 9.2 10.4 12.8 Z" fill="#3aa456"/><path d="M15 12.6 L17.6 15.4" stroke="#3aa456" stroke-width="1"/></svg>
<svg style="left:585px;top:112px" width="22" height="18" viewBox="0 0 22 18"><defs><linearGradient id="fo" x1="0" y1="0" x2="0" y2="1"><stop offset="0" stop-color="#fff3a0"/><stop offset="1" stop-color="#f3c33a"/></linearGradient></defs><path d="M1.6 4.2 Q1.6 1.8 4 1.8 H7.2 Q8.6 1.8 9.6 3 L10.6 4.2 H15.4 Q17.8 4.2 17.8 6.6 V13.4 Q17.8 15.8 15.4 15.8 H4 Q1.6 15.8 1.6 13.4 Z" fill="#e8cf4a" stroke="#a8921e" stroke-width="1.1"/><path d="M2.2 15.6 L5.2 7.8 Q5.6 6.8 6.8 6.8 H19 Q20.4 6.8 20 8 L17.6 14.6 Q17.1 15.9 15.8 15.9 H3 Q2 15.9 2.2 15.6 Z" fill="url(#fo)" stroke="#a8921e" stroke-width="1" stroke-linejoin="round"/></svg>
<div class="t" style="left:1033.5px;top:117.5px;color:#fff;font-size:16.3px;">Item Inquiry ( Inventory Control )</div>
<div class="panel" style="left:341px;top:147px;width:625px;height:256px;"></div>
<div style="left:480px;top:148px;width:1px;height:254px;background:#dcdcdc;"></div>
<div class="panel" style="left:341px;top:409px;width:625px;height:256px;"></div>
<div style="left:480px;top:410px;width:1px;height:254px;background:#dcdcdc;"></div>
<div class="panel" style="left:972px;top:147px;width:594px;height:518px;"></div>
<div style="left:1123px;top:148px;width:1px;height:516px;background:#dcdcdc;"></div>
<div class="panel" style="left:1572px;top:147px;width:342px;height:518px;"></div>
<div class="lbl" style="left:348.5px;top:163.5px;">Company</div>
<div class="lbl" style="left:348.5px;top:194.5px;">Location</div>
<div class="lbl" style="left:348.5px;top:226.5px;">Item Number</div>
<div class="lbl" style="left:348.5px;top:257.5px;">Description 1</div>
<div class="lbl" style="left:348.5px;top:288.5px;">Description 2</div>
<div class="lbl" style="left:348.5px;top:319.5px;">Description 3</div>
<div class="lbl" style="left:348.5px;top:351.5px;">Type</div>
<svg style="left:486px;top:153px" width="22" height="22" viewBox="0 0 22 22"><path d="M13.2 13.2 L19.3 19.3" stroke="#6b3d18" stroke-width="4.2" stroke-linecap="round"/><path d="M13.4 13 L19.2 18.8" stroke="#a8642e" stroke-width="2.6" stroke-linecap="round"/><circle cx="8.4" cy="8.4" r="6.4" fill="url(#mg)" stroke="#3f7f9f" stroke-width="1.8"/></svg>
<svg style="left:486px;top:184px" width="22" height="22" viewBox="0 0 22 22"><path d="M13.2 13.2 L19.3 19.3" stroke="#6b3d18" stroke-width="4.2" stroke-linecap="round"/><path d="M13.4 13 L19.2 18.8" stroke="#a8642e" stroke-width="2.6" stroke-linecap="round"/><circle cx="8.4" cy="8.4" r="6.4" fill="url(#mg)" stroke="#3f7f9f" stroke-width="1.8"/></svg>
<svg style="left:486px;top:216px" width="22" height="22" viewBox="0 0 22 22"><path d="M13.2 13.2 L19.3 19.3" stroke="#6b3d18" stroke-width="4.2" stroke-linecap="round"/><path d="M13.4 13 L19.2 18.8" stroke="#a8642e" stroke-width="2.6" stroke-linecap="round"/><circle cx="8.4" cy="8.4" r="6.4" fill="url(#mg)" stroke="#3f7f9f" stroke-width="1.8"/></svg>
<div class="inp" style="left:518px;top:154px;width:33px;height:25px;padding:0 6px 0 0;text-align:right;">7</div>
<div class="fld" style="left:568px;top:154px;width:388px;height:25px;letter-spacing:0.07px;">Your Company</div>
<div class="inp" style="left:518px;top:185px;width:69px;height:25px;">10</div>
<div class="fld" style="left:593px;top:185px;width:363px;height:25px;letter-spacing:0.07px;">Philadelphia</div>
<div class="inp" style="left:518px;top:217px;width:288px;height:25px;background:#ffffc0;border:2px solid #16306e;line-height:21px;padding:0 6px;">I00985<span style="display:inline-block;width:2px;height:18px;background:#000;vertical-align:-3px;margin-left:-1px"></span></div>
<div class="fld c" style="left:812px;top:217px;width:144px;height:25px;color:#8b1a1a;">Active</div>
<div class="fld" style="left:518px;top:248px;width:438px;height:25px;letter-spacing:0.07px;">Tovala Steak Seasoning</div>
<div class="fld" style="left:518px;top:279px;width:438px;height:25px;letter-spacing:0.07px;">(1,000 sachets per 25 lb Case)</div>
<div class="fld" style="left:518px;top:310px;width:438px;height:25px;"></div>
<div class="fld" style="left:518px;top:342px;width:131px;height:25px;">Manufactured</div>
<div class="fld" style="left:656px;top:342px;width:300px;height:25px;color:#e0353a;">Buying Location</div>
<div class="lbl" style="left:348.5px;top:426.5px;">MFG Code</div>
<div class="lbl" style="left:348.5px;top:457.5px;">Division</div>
<div class="lbl" style="left:348.5px;top:488.5px;">Class</div>
<div class="lbl" style="left:348.5px;top:582.5px;">Prf Vendor</div>
<div class="lbl" style="left:348.5px;top:613.5px;">Buyer</div>
<div class="fld" style="left:487px;top:417px;width:106px;height:25px;"></div>
<div class="fld" style="left:599px;top:417px;width:325px;height:25px;"></div>
<div class="fld r" style="left:487px;top:448px;width:44px;height:25px;">30</div>
<div class="fld" style="left:537px;top:448px;width:387px;height:25px;letter-spacing:0.07px;">Dry Goods - Boxed/Bagged</div>
<div class="fld r" style="left:487px;top:479px;width:44px;height:25px;">11</div>
<div class="fld" style="left:537px;top:479px;width:387px;height:25px;">Spices</div>
<div class="fld" style="left:487px;top:573px;width:106px;height:25px;"></div>
<div class="fld" style="left:599px;top:573px;width:325px;height:25px;"></div>
<div class="fld" style="left:487px;top:604px;width:437px;height:25px;">Gina Parry</div>
<div class="lbl" style="left:1224px;top:162.5px;transform:translate(-50%,-50%);">Location</div>
<div class="lbl" style="left:1355px;top:162.5px;transform:translate(-50%,-50%);">All</div>
<div class="lbl" style="left:980px;top:191.5px;">On Hand</div>
<div class="fld r" style="left:1162px;top:182px;width:125px;height:22px;padding-right:5px;">115.00</div>
<div class="fld r" style="left:1293px;top:182px;width:125px;height:22px;padding-right:5px;">165.00</div>
<div class="lbl" style="left:980px;top:220.22px;">Committed</div>
<div class="fld r" style="left:1162px;top:210px;width:125px;height:22px;padding-right:5px;">47.00</div>
<div class="fld r" style="left:1293px;top:210px;width:125px;height:22px;padding-right:5px;">47.00</div>
<div class="lbl" style="left:980px;top:248.94px;">Available</div>
<div class="fld r" style="left:1162px;top:239px;width:125px;height:22px;padding-right:5px;">68.00</div>
<div class="fld r" style="left:1293px;top:239px;width:125px;height:22px;padding-right:5px;">118.00</div>
<div class="lbl" style="left:980px;top:277.65999999999997px;">Unallocated</div>
<div class="fld r" style="left:1162px;top:268px;width:125px;height:22px;padding-right:5px;">.00</div>
<div class="lbl" style="left:980px;top:306.38px;">Backorder</div>
<div class="fld r" style="left:1162px;top:297px;width:125px;height:22px;padding-right:5px;">45.00</div>
<div class="lbl" style="left:980px;top:335.1px;">Open P.O.s</div>
<div class="fld r" style="left:1162px;top:325px;width:125px;height:22px;padding-right:5px;">.00</div>
<div class="lbl" style="left:980px;top:363.82px;">Blanket P.O.s</div>
<div class="fld r" style="left:1162px;top:354px;width:125px;height:22px;padding-right:5px;">.00</div>
<div class="lbl" style="left:980px;top:392.53999999999996px;">Cargo In-Bound</div>
<div class="fld r" style="left:1162px;top:383px;width:125px;height:22px;padding-right:5px;">.00</div>
<div class="lbl" style="left:980px;top:421.26px;">Transfers</div>
<div class="fld r" style="left:1162px;top:412px;width:125px;height:22px;padding-right:5px;">.00</div>
<div class="lbl" style="left:980px;top:449.98px;">Future</div>
<div class="fld r" style="left:1162px;top:440px;width:125px;height:22px;padding-right:5px;">.00</div>
<div class="lbl" style="left:980px;top:478.7px;">Open M.O.s</div>
<div class="fld r" style="left:1162px;top:469px;width:125px;height:22px;padding-right:5px;">145.00</div>
<div class="lbl" style="left:980px;top:507.41999999999996px;">W.I.P</div>
<div class="fld r" style="left:1162px;top:498px;width:125px;height:22px;padding-right:5px;">145.00</div>
<div class="lbl" style="left:980px;top:536.14px;">Unavailable</div>
<div class="fld r" style="left:1162px;top:527px;width:125px;height:22px;padding-right:5px;">.00</div>
<div class="lbl" style="left:980px;top:564.5px;">Unit of Measure</div>
<svg style="left:1130px;top:555px" width="22" height="22" viewBox="0 0 22 22"><path d="M13.2 13.2 L19.3 19.3" stroke="#6b3d18" stroke-width="4.2" stroke-linecap="round"/><path d="M13.4 13 L19.2 18.8" stroke="#a8642e" stroke-width="2.6" stroke-linecap="round"/><circle cx="8.4" cy="8.4" r="6.4" fill="url(#mg)" stroke="#3f7f9f" stroke-width="1.8"/></svg>
<div class="inp" style="left:1162px;top:555px;width:56px;height:25px;padding:0 6px;">CSE</div>
<div class="fld" style="left:1224px;top:555px;width:332px;height:25px;">Case</div>
<div style="left:1578px;top:219px;width:336px;height:375px;background:#fff;border:1px solid #cfcfcf;border-right:none;"></div>
<svg style="left:1579px;top:220px" width="334" height="373" viewBox="1579 220 334 373">
<defs>
<linearGradient id="sil" x1="0" y1="0" x2="1" y2="0"><stop offset="0" stop-color="#b4b6b9"/><stop offset="0.03" stop-color="#d9dadc"/><stop offset="0.1" stop-color="#c6c8cb"/><stop offset="0.5" stop-color="#d2d4d6"/><stop offset="0.9" stop-color="#cccdd0"/><stop offset="0.96" stop-color="#e4e5e6"/><stop offset="1" stop-color="#b9bbbe"/></linearGradient>
<linearGradient id="silv" x1="0" y1="0" x2="0" y2="1"><stop offset="0" stop-color="#f2f3f4" stop-opacity="0.9"/><stop offset="0.1" stop-color="#dcdee0" stop-opacity="0.5"/><stop offset="0.9" stop-color="#d0d2d5" stop-opacity="0"/><stop offset="1" stop-color="#b9bbbe" stop-opacity="0.8"/></linearGradient>
<linearGradient id="spice" x1="0" y1="0" x2="0.45" y2="1"><stop offset="0" stop-color="#dbb079"/><stop offset="0.35" stop-color="#d3a161"/><stop offset="0.62" stop-color="#ca9346"/><stop offset="1" stop-color="#c08631"/></linearGradient>
<filter id="grain" x="0" y="0" width="100%" height="100%" color-interpolation-filters="sRGB"><feTurbulence type="fractalNoise" baseFrequency="1.1" numOctaves="2" seed="7" result="n"/><feColorMatrix in="n" type="matrix" values="0 0 0 0 0.62  0 0 0 0 0.38  0 0 0 0 0.14  0 0 0 -7 4.0"/><feComposite in2="SourceGraphic" operator="in"/></filter>
<filter id="grain2" x="0" y="0" width="100%" height="100%" color-interpolation-filters="sRGB"><feTurbulence type="fractalNoise" baseFrequency="0.9" numOctaves="2" seed="11" result="n"/><feColorMatrix in="n" type="matrix" values="0 0 0 0 0.93  0 0 0 0 0.76  0 0 0 0 0.50  0 0 0 -7 3.2"/><feComposite in2="SourceGraphic" operator="in"/></filter>
<filter id="cloud" x="0" y="0" width="100%" height="100%" color-interpolation-filters="sRGB"><feTurbulence type="fractalNoise" baseFrequency="0.03" numOctaves="2" seed="5" result="n"/><feColorMatrix in="n" type="matrix" values="0 0 0 0 0.74  0 0 0 0 0.50  0 0 0 0 0.22  0 0 0 -4 2.3"/><feComposite in2="SourceGraphic" operator="in"/></filter>
<filter id="wr" x="0" y="0" width="100%" height="100%" color-interpolation-filters="sRGB"><feTurbulence type="fractalNoise" baseFrequency="0.04 0.1" numOctaves="3" seed="2" result="n"/><feColorMatrix in="n" type="matrix" values="0 0 0 0 1  0 0 0 0 1  0 0 0 0 1  0 0 0 -4 2.2"/><feComposite in2="SourceGraphic" operator="in"/></filter>
<filter id="bl"><feGaussianBlur stdDeviation="2.2"/></filter>
<filter id="bl1"><feGaussianBlur stdDeviation="0.8"/></filter>
</defs>
<path d="M1643 240 L1700 238 L1790 240 L1876 239 L1877 300 L1876 560 L1800 561 L1700 560 L1642 561 L1641 400 Z" fill="url(#sil)"/>
<path d="M1643 240 L1700 238 L1790 240 L1876 239 L1877 300 L1876 560 L1800 561 L1700 560 L1642 561 L1641 400 Z" fill="url(#silv)"/>
<path d="M1643 240 L1876 239 L1876 560 L1642 561 Z" fill="#fff" filter="url(#wr)" opacity="0.45"/>
<rect x="1643" y="262" width="232" height="10" fill="#eef0f1" opacity="0.55" filter="url(#bl1)"/>
<path d="M1655 278 Q1760 272 1860 279 Q1862 410 1858 530 Q1857 541 1846 542 Q1760 546 1668 542 Q1656 541 1655 530 Q1652 410 1655 278 Z" fill="url(#spice)"/>
<path d="M1655 278 Q1760 272 1860 279 Q1862 410 1858 530 Q1857 541 1846 542 Q1760 546 1668 542 Q1656 541 1655 530 Q1652 410 1655 278 Z" fill="#c98a3a" filter="url(#grain)" opacity="0.42"/>
<path d="M1655 278 Q1760 272 1860 279 Q1862 410 1858 530 Q1857 541 1846 542 Q1760 546 1668 542 Q1656 541 1655 530 Q1652 410 1655 278 Z" fill="#c98a3a" filter="url(#grain2)" opacity="0.45"/>
<path d="M1655 278 Q1760 272 1860 279 Q1862 410 1858 530 Q1857 541 1846 542 Q1760 546 1668 542 Q1656 541 1655 530 Q1652 410 1655 278 Z" fill="#c98a3a" filter="url(#cloud)" opacity="0.25"/>
<g filter="url(#bl1)" fill="none" stroke="#fff5e4" stroke-linecap="round">
<path d="M1700 293 L1716 284" stroke-width="4" opacity="0.48"/>
<path d="M1797 318 Q1815 300 1830 297 Q1842 300 1850 292" stroke-width="5" opacity="0.40"/>
<path d="M1812 322 L1838 304" stroke-width="6" opacity="0.28"/>
<path d="M1846 300 Q1852 330 1846 365" stroke-width="3" opacity="0.36"/>
<path d="M1674 335 Q1670 370 1676 415" stroke-width="3" opacity="0.32"/>
<path d="M1668 325 L1682 318" stroke-width="2.5" opacity="0.36"/>
<path d="M1824 345 Q1836 380 1828 420" stroke-width="2.5" opacity="0.28"/>
<path d="M1838 400 L1850 440" stroke-width="2.5" opacity="0.24"/>
<path d="M1746 470 Q1770 478 1790 500" stroke-width="3" opacity="0.32"/>
<path d="M1690 505 Q1705 515 1700 530" stroke-width="2.5" opacity="0.28"/>
<path d="M1662 520 Q1680 528 1720 526" stroke-width="2.5" opacity="0.28"/>
<path d="M1700 300 Q1730 320 1720 350" stroke-width="2" opacity="0.20"/>
</g>
<rect x="1695.5" y="333" width="122" height="127" rx="3" fill="#fbfbfb"/>
<path d="M1706 340 Q1712 337 1718 339 Q1730 342 1743 338 L1745 340 Q1743 350 1745 359 Q1735 362 1726 360 L1725 364 L1720 360 Q1712 358 1706 361 Q1708 350 1706 340 Z" fill="#b8232b"/>
<text x="1725" y="349.5" font-family="Liberation Serif,serif" font-style="italic" font-weight="bold" font-size="5" fill="#fff" text-anchor="middle">PS Seasoning</text>
<text x="1725" y="355.5" font-family="Liberation Serif,serif" font-style="italic" font-weight="bold" font-size="5" fill="#fff" text-anchor="middle">&amp; Spices</text>
<text x="1749.5" y="349" font-family="Liberation Serif,serif" font-size="9.6" fill="#3a3a3a" textLength="59" lengthAdjust="spacingAndGlyphs">PS Seasoning &amp;</text>
<text x="1749.5" y="358.5" font-family="Liberation Serif,serif" font-size="9.6" fill="#3a3a3a" textLength="41" lengthAdjust="spacingAndGlyphs">Spices Inc.</text>
<g font-family="Liberation Sans,sans-serif" fill="#3a3a3a" text-anchor="middle">
<text x="1756.5" y="379" font-size="7" font-weight="bold" textLength="59" lengthAdjust="spacingAndGlyphs">SWEET ITALIAN</text>
<text x="1758" y="388.8" font-size="7" font-weight="bold" textLength="91" lengthAdjust="spacingAndGlyphs">SEASONING (NO M.S.G.)</text>
<text x="1756.5" y="398.5" font-size="7" font-weight="bold">#673-B</text>
<text x="1755.3" y="412.3" font-size="3.7" textLength="82.5" lengthAdjust="spacingAndGlyphs">INGREDIENTS: SALT, SPICES, FENNEL</text>
<text x="1736.7" y="416.3" font-size="3.7" textLength="45" lengthAdjust="spacingAndGlyphs">SEED, TORULA YEAST.</text>
<text x="1757.7" y="425.3" font-size="4.6" textLength="77.5" lengthAdjust="spacingAndGlyphs">USE: 0.62 LB. to 25 LBS. of Meat</text>
<text x="1720" y="434.5" font-size="3">02-1140</text>
<text x="1782" y="434.5" font-size="3">N011618 34314</text>
<text x="1755.3" y="445.3" font-size="7" textLength="82.5" lengthAdjust="spacingAndGlyphs">NET WT 0.62 LB (281.2g)</text>
<text x="1754.5" y="456" font-size="3.6" fill="#9a4a4a" textLength="110" lengthAdjust="spacingAndGlyphs">Iron Ridge, WI • 1-800-328-8313 • www.psseasoning.com</text>
</g>
</svg>
<div style="left:340px;top:673px;width:1573px;height:36px;background:#034d8f;"></div>
<div class="btn" style="left:345px;top:676.5px;width:116px;height:27.5px;">Sales History</div>
<div class="btn" style="left:463px;top:676.5px;width:123px;height:27.5px;">Open Orders</div>
<div class="btn" style="left:588px;top:676.5px;width:92px;height:27.5px;">Locations</div>
<div class="btn" style="left:682px;top:676.5px;width:61px;height:27.5px;">Bins</div>
<div class="btn" style="left:745px;top:676.5px;width:123px;height:27.5px;">Lots</div>
<div class="btn" style="left:870px;top:676.5px;width:129px;height:27.5px;">Receipt History</div>
<div class="btn" style="left:1001px;top:676.5px;width:98px;height:27.5px;">Inv History</div>
<div class="btn" style="left:1101px;top:676.5px;width:117px;height:27.5px;">Commitments</div>
<div class="btn" style="left:1220px;top:676.5px;width:73px;height:27.5px;">Vendor</div>
<div class="btn" style="left:1295px;top:676.5px;width:73px;height:27.5px;">PO/MO</div>
<div class="btn" style="left:1370px;top:676.5px;width:73px;height:27.5px;">Cargo</div>
<div class="btn" style="left:1445px;top:676.5px;width:74px;height:27.5px;">Costs</div>
<div class="btn" style="left:1521px;top:676.5px;width:117px;height:27.5px;">Miscellaneous</div>
<div class="btn" style="left:1640px;top:676.5px;width:116px;height:27.5px;">Manufacturing</div>
<div class="btn" style="left:1758px;top:676.5px;width:98px;height:27.5px;">Comments</div>
<div style="left:340px;top:750px;width:1573px;height:1px;background:#1b3358;"></div>
<div style="left:340px;top:751px;width:1px;height:236px;background:#1b3358;"></div>
<div class="tab" style="left:423px;top:720px;width:136px;height:30px;padding-left:1px;">Additional Info</div>
<div class="tab" style="left:560px;top:720px;width:98px;height:30px;padding-left:6px;">Demand</div>
<div class="tab" style="left:660px;top:720px;width:83px;height:30px;padding-left:1px;">Usage</div>
<div class="tab" style="left:745px;top:720px;width:155px;height:30px;padding-left:2px;">Invoice / Receipt</div>
<div class="tab" style="left:902px;top:720px;width:77px;height:30px;padding-left:2px;">Sales</div>
<div style="left:346px;top:715px;width:79px;height:36px;background:linear-gradient(#ffffff,#fcfcfc);border:1px solid #1a2058;border-bottom:none;border-radius:4px 4px 0 0;font-size:16.13px;text-align:center;color:#444;line-height:32px;padding-left:4px;">UOM</div>
<div class="lbl" style="left:463px;top:766.5px;transform:translate(-50%,-50%);">U/M</div>
<div class="lbl" style="left:538px;top:766.5px;transform:translate(-50%,-50%);">Pieces</div>
<div class="lbl" style="left:669px;top:766.5px;transform:translate(-50%,-50%);">Packaging</div>
<div class="fld2" style="left:356px;top:788px;width:81px;height:23px;color:#e0353a;">Stocking</div>
<div class="fld2" style="left:441px;top:788px;width:44px;height:23px;">CSE</div>
<div class="fld2 r" style="left:491px;top:788px;width:95px;height:23px;padding-right:1px;">1.00</div>
<div class="fld2" style="left:591px;top:788px;width:156px;height:23px;">1000 SACHETS</div>
<div class="fld2" style="left:356px;top:817px;width:81px;height:23px;">Selling</div>
<div class="fld2" style="left:441px;top:817px;width:44px;height:23px;">CSE</div>
<div class="fld2 r" style="left:491px;top:817px;width:95px;height:23px;padding-right:1px;">1.00</div>
<div class="fld2" style="left:591px;top:817px;width:156px;height:23px;">1000 SACHETS</div>
<div class="fld2" style="left:356px;top:846px;width:81px;height:23px;">Prchasng</div>
<div class="fld2" style="left:441px;top:846px;width:44px;height:23px;">CSE</div>
<div class="fld2 r" style="left:491px;top:846px;width:95px;height:23px;padding-right:1px;">1.00</div>
<div class="fld2" style="left:591px;top:846px;width:156px;height:23px;">1000 SACHETS</div>
<div class="fld2" style="left:356px;top:874px;width:81px;height:23px;">Other</div>
<div class="fld2" style="left:441px;top:874px;width:44px;height:23px;">LB</div>
<div class="fld2 r" style="left:491px;top:874px;width:95px;height:23px;padding-right:1px;">.04</div>
<div class="fld2" style="left:591px;top:874px;width:156px;height:23px;">1000 SACHETS</div>
<div class="lbl" style="left:785px;top:798px;">Cubic</div>
<div class="fld2 r" style="left:944px;top:788px;width:107px;height:23px;padding-right:1.5px;">1.0000</div>
<div class="lbl" style="left:785px;top:827px;">Master</div>
<div class="fld2 r" style="left:944px;top:817px;width:107px;height:23px;padding-right:1.5px;">0</div>
<div class="lbl" style="left:785px;top:856px;">Inner</div>
<div class="fld2 r" style="left:944px;top:846px;width:107px;height:23px;padding-right:1.5px;">1000</div>
<div class="lbl" style="left:1087px;top:798px;">Weight</div>
<div class="fld2 r" style="left:1212px;top:788px;width:132px;height:23px;padding-right:1px;">25.0000</div>
<div class="lbl" style="left:1087px;top:827px;">Length</div>
<div class="fld2 r" style="left:1212px;top:817px;width:132px;height:23px;padding-right:15px;">.00</div>
<div class="lbl" style="left:1087px;top:856px;">Height</div>
<div class="fld2 r" style="left:1212px;top:846px;width:132px;height:23px;padding-right:15px;">.00</div>
<div class="lbl" style="left:1087px;top:884px;">Width</div>
<div class="fld2 r" style="left:1212px;top:874px;width:132px;height:23px;padding-right:15px;">.00</div>
<div style="left:340px;top:986px;width:1573px;height:1px;background:#16294a;"></div>
<div style="left:340px;top:987px;width:1573px;height:21px;background:linear-gradient(#d6d6d6,#e4e4e4 40%,#f4f4f4);"></div>
<div style="left:341px;top:988px;width:18px;height:18px;background:linear-gradient(#f6f6f6,#dcdcdc 55%,#b8b8b8);border:1px solid #5a5a5a;border-radius:3px;"></div>
<svg style="left:346px;top:992.5px" width="6" height="9"><path d="M5.4 0.4 L0.6 4.5 L5.4 8.6 Z" fill="#2a2a2a"/></svg>
<div style="left:361px;top:988px;width:1485px;height:18px;background:linear-gradient(#f4f4f4,#e2e2e2 50%,#c6c6c6);border:1px solid #5f5f5f;border-radius:4px;"></div>
<div style="left:1893px;top:988px;width:18px;height:18px;background:linear-gradient(#f6f6f6,#dcdcdc 55%,#b8b8b8);border:1px solid #5a5a5a;border-radius:3px;"></div>
<svg style="left:1900px;top:992.5px" width="6" height="9"><path d="M0.4 0.4 L5.2 4.5 L0.4 8.6 Z" fill="#2a2a2a"/></svg>
<div class="t" style="left:960px;top:1045.5px;transform:translate(-50%,-50%);font-size:16px;letter-spacing:0.09px;color:#222;">© 2024 S2K Smart Center - Vormittag Associates Inc.</div>
</body></html>
